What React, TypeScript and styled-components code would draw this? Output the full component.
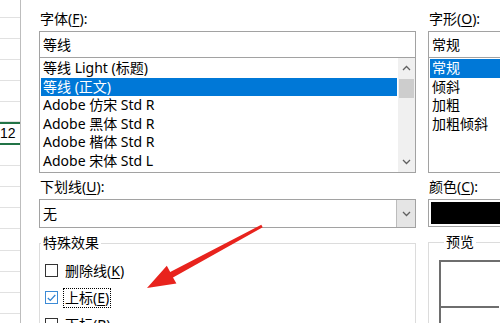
import React from 'react';
import styled, { createGlobalStyle } from 'styled-components';

const GlobalStyle = createGlobalStyle`
  html, body {
    margin: 0;
    padding: 0;
    background: #ffffff;
  }
  body {
    font-family: 'Noto Sans', 'Noto Sans CJK SC', sans-serif;
    font-size: 14px;
    color: #000000;
  }
`;

const uiFont = `'Noto Sans', 'Noto Sans CJK SC', sans-serif`;
const selectBlue = '#0078d7';
const fieldBorder = '#a2a2a2';
const groupBorder = '#dcdcdc';

const Page = styled.div`
  position: relative;
  display: flex;
  align-items: flex-start;
  width: 500px;
  height: 323px;
  overflow: hidden;
  background: #ffffff;
`;

const Sheet = styled.div`
  width: 20px;
  height: 323px;
  flex-shrink: 0;
  border-right: 1px solid #bdbdbd;
  background: #ffffff;
  overflow: hidden;
`;

const SheetRow = styled.div<{ $h: number; $selected?: boolean }>`
  box-sizing: border-box;
  height: ${(p) => p.$h}px;
  border-bottom: 1px solid #e1e1e1;
  font-family: 'Liberation Sans', sans-serif;
  font-size: 14px;
  text-align: right;
  padding-right: 8px;
  line-height: ${(p) => p.$h}px;
  ${(p) =>
    p.$selected &&
    `
    border-top: 2px solid #217346;
    border-bottom: 2px solid #217346;
    line-height: ${p.$h - 4}px;
  `}
`;

const Dialog = styled.div`
  flex: 1;
  display: flex;
  align-items: flex-start;
  gap: 12px;
  padding: 9px 0 0 18px;
  min-width: 0;
`;

const Column = styled.div<{ $w: number }>`
  width: ${(p) => p.$w}px;
  flex-shrink: 0;
  display: flex;
  flex-direction: column;
  & > * {
    flex-shrink: 0;
  }
`;

const Label = styled.div<{ $top?: number }>`
  height: 20px;
  line-height: 20px;
  padding-left: 1px;
  margin-top: ${(p) => p.$top ?? 0}px;
  margin-bottom: 2px;
  font-family: ${uiFont};
  font-size: 14px;
  white-space: nowrap;
  u {
    text-decoration: underline;
    text-underline-offset: 2px;
  }
`;

const TextField = styled.div`
  box-sizing: border-box;
  height: 27px;
  border: 1px solid ${fieldBorder};
  padding-left: 3px;
  line-height: 25px;
  font-size: 14px;
  white-space: nowrap;
`;

const ListBox = styled.div<{ $h: number }>`
  box-sizing: border-box;
  display: flex;
  height: ${(p) => p.$h}px;
  border: 1px solid ${fieldBorder};
  border-top: none;
  overflow: hidden;
`;

const Items = styled.div`
  flex: 1;
  padding: 1px 1px 0 1px;
  min-width: 0;
`;

const Item = styled.div<{ $selected?: boolean }>`
  height: 18.5px;
  line-height: 18.5px;
  padding-left: 2px;
  font-size: 14px;
  white-space: nowrap;
  background: ${(p) => (p.$selected ? selectBlue : 'transparent')};
  color: ${(p) => (p.$selected ? '#ffffff' : '#000000')};
`;

const ScrollBar = styled.div`
  width: 17px;
  display: flex;
  flex-direction: column;
  background: #f0f0f0;
`;

const ScrollArrow = styled.div`
  height: 20px;
  display: flex;
  align-items: center;
  justify-content: center;
`;

const Thumb = styled.div`
  height: 19px;
  margin: 1px 1px 0;
  background: #cdcdcd;
`;

const ScrollGap = styled.div`
  flex: 1;
`;

const Combo = styled.div`
  box-sizing: border-box;
  display: flex;
  height: 29px;
  border: 1px solid ${fieldBorder};
`;

const ComboText = styled.div`
  flex: 1;
  padding-left: 3px;
  line-height: 27px;
  font-size: 14px;
`;

const ComboButton = styled.div`
  width: 18px;
  background: #e5e5e5;
  border-left: 1px solid #bcbcbc;
  display: flex;
  align-items: center;
  justify-content: center;
`;

const ColorWell = styled.div`
  box-sizing: border-box;
  height: 28px;
  border: 1px solid ${fieldBorder};
  padding: 2px;
`;

const ColorFill = styled.div<{ $color: string }>`
  height: 100%;
  background: ${(p) => p.$color};
`;

const Group = styled.fieldset<{ $padLeft: number; $padTop: number }>`
  margin: 7px 0 0 0;
  padding: ${(p) => p.$padTop}px 0 40px ${(p) => p.$padLeft}px;
  border: 1px solid ${groupBorder};
  min-width: 0;
`;

const GroupLegend = styled.legend<{ $shift: number }>`
  padding: 0 2px;
  margin-left: ${(p) => p.$shift}px;
  height: 16px;
  line-height: 16px;
  font-size: 14px;
`;

const CheckRow = styled.div`
  height: 27px;
  display: flex;
  align-items: center;
  gap: 5px;
  font-size: 14px;
  white-space: nowrap;
  u {
    text-decoration: underline;
    text-underline-offset: 2px;
  }
`;

const Box = styled.div<{ $checked?: boolean }>`
  box-sizing: border-box;
  width: 13px;
  height: 13px;
  border: 1px solid ${(p) => (p.$checked ? '#3c8bd6' : '#333333')};
  display: flex;
  align-items: center;
  justify-content: center;
  background: #ffffff;
`;

const CheckText = styled.span<{ $focus?: boolean }>`
  padding: 1px 1px;
  line-height: 16px;
  border: 1px dotted ${(p) => (p.$focus ? '#000000' : 'transparent')};
`;

const PreviewFrame = styled.div`
  height: 80px;
  border-top: 2px solid #6e6e6e;
  border-left: 2px solid #6e6e6e;
`;

const Baseline = styled.div`
  width: 58px;
  margin-top: 44px;
  border-top: 2px solid #6e6e6e;
`;

const ArrowLayer = styled.svg`
  position: absolute;
  left: 0;
  top: 0;
  pointer-events: none;
`;

const Chevron = ({ up }: { up?: boolean }) => (
  <svg width="9" height="6" viewBox="0 0 9 6">
    <polyline
      points={up ? '1,5 4.5,1.5 8,5' : '1,1 4.5,4.5 8,1'}
      fill="none"
      stroke="#606060"
      strokeWidth="1.3"
    />
  </svg>
);

const sheetRows = [18, 21, 21, 21, 21, 20, 23, 21, 21, 21, 21, 22, 21, 21, 21, 21];

const fonts = [
  '等线 Light (标题)',
  '等线 (正文)',
  'Adobe 仿宋 Std R',
  'Adobe 黑体 Std R',
  'Adobe 楷体 Std R',
  'Adobe 宋体 Std L',
];

const styles = ['常规', '倾斜', '加粗', '加粗倾斜'];

export default function App() {
  return (
    <>
      <GlobalStyle />
      <Page>
        <Sheet>
          {sheetRows.map((h, i) => (
            <SheetRow key={i} $h={h} $selected={i === 6}>
              {i === 6 ? '12' : ''}
            </SheetRow>
          ))}
        </Sheet>
        <Dialog>
          <Column $w={377}>
            <Label>
              字体(<u>F</u>):
            </Label>
            <TextField>等线</TextField>
            <ListBox $h={115}>
              <Items>
                {fonts.map((f, i) => (
                  <Item key={f} $selected={i === 1}>
                    {f}
                  </Item>
                ))}
              </Items>
              <ScrollBar>
                <ScrollArrow>
                  <Chevron up />
                </ScrollArrow>
                <Thumb />
                <ScrollGap />
                <ScrollArrow>
                  <Chevron />
                </ScrollArrow>
              </ScrollBar>
            </ListBox>
            <Label $top={4}>
              下划线(<u>U</u>):
            </Label>
            <Combo>
              <ComboText>无</ComboText>
              <ComboButton>
                <Chevron />
              </ComboButton>
            </Combo>
            <Group $padLeft={5} $padTop={6}>
              <GroupLegend $shift={-4}>特殊效果</GroupLegend>
              <CheckRow>
                <Box />
                <CheckText>
                  删除线(<u>K</u>)
                </CheckText>
              </CheckRow>
              <CheckRow>
                <Box $checked>
                  <svg width="9" height="8" viewBox="0 0 9 8">
                    <polyline
                      points="0.8,4 3.3,6.5 8.3,1"
                      fill="none"
                      stroke="#2f80d1"
                      strokeWidth="1.2"
                    />
                  </svg>
                </Box>
                <CheckText $focus>
                  上标(<u>E</u>)
                </CheckText>
              </CheckRow>
              <CheckRow>
                <Box />
                <CheckText>
                  下标(<u>B</u>)
                </CheckText>
              </CheckRow>
            </Group>
          </Column>
          <Column $w={160}>
            <Label>
              字形(<u>O</u>):
            </Label>
            <TextField>常规</TextField>
            <ListBox $h={115}>
              <Items>
                {styles.map((s, i) => (
                  <Item key={s} $selected={i === 0}>
                    {s}
                  </Item>
                ))}
              </Items>
            </ListBox>
            <Label $top={4}>
              颜色(<u>C</u>):
            </Label>
            <ColorWell>
              <ColorFill $color="#000000" />
            </ColorWell>
            <Group $padLeft={10} $padTop={10}>
              <GroupLegend $shift={5}>预览</GroupLegend>
              <PreviewFrame>
                <Baseline />
              </PreviewFrame>
            </Group>
          </Column>
        </Dialog>
        <ArrowLayer width="500" height="323" viewBox="0 0 500 323">
          <polygon
            points="147,288 166.8,265.8 170.2,272 261.3,224.8 262.7,227.2 173,277.4 176.4,283.6"
            fill="#e8231d"
          />
        </ArrowLayer>
      </Page>
    </>
  );
}
